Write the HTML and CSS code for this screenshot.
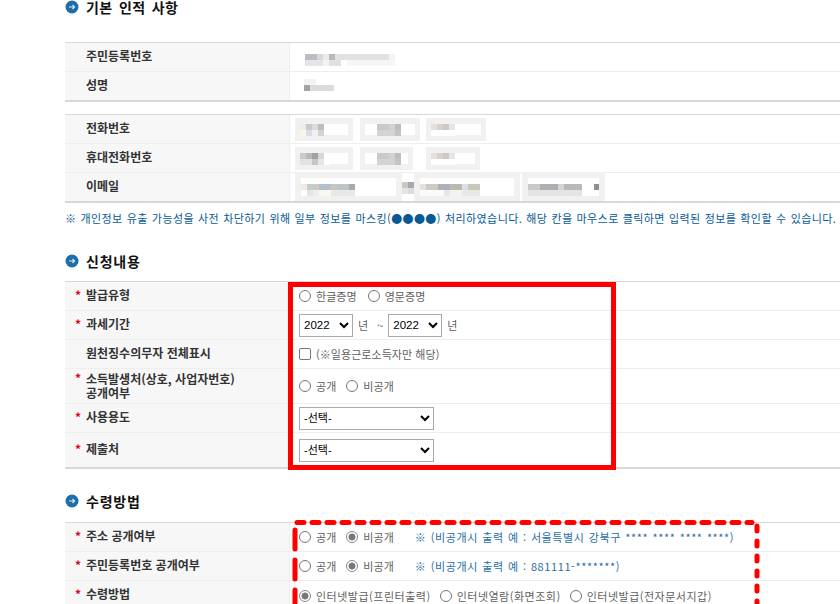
FILE: index.html
```html
<!DOCTYPE html>
<html lang="ko">
<head>
<meta charset="utf-8">
<title>신청</title>
<link rel="stylesheet" href="styles.css">
</head>
<body>
<main class="page">
  <h2 class="heading h-first"><svg class="bullet" viewBox="0 0 14 14"><circle cx="7" cy="7" r="6.5" fill="#1d6da6"/><path d="M4 7h5.5M7.5 5l2 2-2 2" fill="none" stroke="#dbe9f3" stroke-width="1.2"/></svg><span class="spaced">기본 인적 사항</span></h2>

  <section class="tbl">
    <div class="row"><div class="label">주민등록번호</div><div class="value"><span class="moz moz-id"></span></div></div>
    <div class="row"><div class="label">성명</div><div class="value"><span class="moz moz-name"></span></div></div>
  </section>

  <section class="tbl tbl-contact">
    <div class="row"><div class="label">전화번호</div><div class="value masks">
      <span class="box w58"><span class="moz m-a"></span></span><span class="box w60 ml7"><span class="moz m-b"></span></span><span class="box w60 ml6"><span class="moz m-c"></span></span>
    </div></div>
    <div class="row"><div class="label">휴대전화번호</div><div class="value masks">
      <span class="box w58"><span class="moz m-d"></span></span><span class="box w53 ml7"><span class="moz m-b"></span></span><span class="box w54 ml13"><span class="moz m-c"></span></span>
    </div></div>
    <div class="row"><div class="label">이메일</div><div class="value masks">
      <span class="box w107 tall"><span class="moz m-e"></span></span><span class="moz m-at"></span><span class="box w106 tall"><span class="moz m-f"></span></span><span class="box w83 tall ml2"><span class="moz m-g"></span></span>
    </div></div>
  </section>

  <p class="note">※ 개인정보 유출 가능성을 사전 차단하기 위해 일부 정보를 마스킹(●●●●) 처리하였습니다. 해당 칸을 마우스로 클릭하면 입력된 정보를 확인할 수 있습니다.</p>

  <h2 class="heading h-second"><svg class="bullet" viewBox="0 0 14 14"><circle cx="7" cy="7" r="6.5" fill="#1d6da6"/><path d="M4 7h5.5M7.5 5l2 2-2 2" fill="none" stroke="#dbe9f3" stroke-width="1.2"/></svg><span>신청내용</span></h2>

  <section class="tbl form">
    <div class="row"><div class="label req">발급유형</div><div class="value">
      <label class="opt"><input type="radio" name="a"><span>한글증명</span></label>
      <label class="opt opt-next"><input type="radio" name="a"><span>영문증명</span></label>
    </div></div>
    <div class="row"><div class="label req">과세기간</div><div class="value">
      <select class="sel-year"><option>2022</option></select><span class="unit">년</span><span class="tilde">~</span><select class="sel-year"><option>2022</option></select><span class="unit">년</span>
    </div></div>
    <div class="row"><div class="label plain">원천징수의무자 전체표시</div><div class="value">
      <label class="opt"><input type="checkbox"><span>(※일용근로소득자만 해당)</span></label>
    </div></div>
    <div class="row row-tall"><div class="label req two"><span>소득발생처(상호, 사업자번호)<br>공개여부</span></div><div class="value">
      <label class="opt"><input type="radio" name="b"><span>공개</span></label>
      <label class="opt opt-gap"><input type="radio" name="b"><span>비공개</span></label>
    </div></div>
    <div class="row"><div class="label req">사용용도</div><div class="value">
      <select class="sel-wide"><option>-선택-</option></select>
    </div></div>
    <div class="row row-tall"><div class="label req">제출처</div><div class="value">
      <select class="sel-wide"><option>-선택-</option></select>
    </div></div>
  </section>

  <h2 class="heading h-third"><svg class="bullet" viewBox="0 0 14 14"><circle cx="7" cy="7" r="6.5" fill="#1d6da6"/><path d="M4 7h5.5M7.5 5l2 2-2 2" fill="none" stroke="#dbe9f3" stroke-width="1.2"/></svg><span>수령방법</span></h2>

  <section class="tbl form">
    <div class="row"><div class="label req">주소 공개여부</div><div class="value">
      <label class="opt"><input type="radio" name="c"><span>공개</span></label>
      <label class="opt opt-gap"><input type="radio" name="c" checked><span>비공개</span></label>
      <span class="hint">※ (비공개시 출력 예 : 서울특별시 강북구 **** **** **** ****)</span>
    </div></div>
    <div class="row"><div class="label req">주민등록번호 공개여부</div><div class="value">
      <label class="opt"><input type="radio" name="d"><span>공개</span></label>
      <label class="opt opt-gap"><input type="radio" name="d" checked><span>비공개</span></label>
      <span class="hint">※ (비공개시 출력 예 : 881111-*******)</span>
    </div></div>
    <div class="row row-clip"><div class="label req">수령방법</div><div class="value">
      <label class="opt opt-wide"><input type="radio" name="e" checked><span>인터넷발급(프린터출력)</span></label>
      <label class="opt opt-wide opt-m1"><input type="radio" name="e"><span>인터넷열람(화면조회)</span></label>
      <label class="opt opt-wide opt-m2"><input type="radio" name="e"><span>인터넷발급(전자문서지갑)</span></label>
    </div></div>
  </section>
</main>

<div class="redbox"></div>
<svg class="dashes" viewBox="0 0 840 604" width="840" height="604">
  <path class="d-top" d="M297 522.5H752"/>
  <path class="d-left" d="M295 530V604"/>
  <path class="d-right" d="M757 526V604"/>
</svg>
</body>
</html>
```

FILE: styles.css
```css
html, body { margin: 0; padding: 0; height: 604px; overflow: hidden; background: #fff; }
body { position: relative; font-family: "Noto Sans CJK KR", "Liberation Sans", sans-serif; color: #5f5f5f; font-size: 11px; }
.page { padding-left: 65px; width: 775px; }

.heading { display: flex; align-items: center; margin: 0; height: 14px; font-size: 14px; line-height: 14px; font-weight: 700; color: #111; letter-spacing: .8px; }
.bullet { width: 14px; height: 14px; margin-right: 7px; flex: none; }
.spaced { letter-spacing: .4px; word-spacing: 2px; }
.h-first { margin-bottom: 28px; }
.h-second { margin-top: 29px; margin-bottom: 13px; }
.h-third { margin-top: 25px; margin-bottom: 14px; }

.tbl { border-top: 1px solid #d8d8d8; border-bottom: 2px solid #d8d8d8; }
.tbl-contact { margin-top: 12px; }
.row { display: grid; grid-template-columns: 225px 1fr; height: 28px; border-bottom: 1px solid #eee; }
.row:last-child { border-bottom: 0; }
.row-tall { height: 34px; }
.row-clip { height: 40px; }
.label { display: flex; align-items: center; padding: 0 0 3px 21px; background: #f7f7f7; border-right: 1px solid #eee; font-size: 12px; font-weight: 700; color: #333; line-height: 14px; box-sizing: border-box; }
.req { position: relative; }
.req::before { content: "*"; position: absolute; left: 10px; top: calc(50% - 8px); color: #d9001b; font-size: 12px; font-weight: 700; line-height: 14px; }
.two { padding-bottom: 0; }
.req.two::before { top: 2px; }
.row-clip .label, .row-clip .value { align-items: flex-start; padding-top: 7px; }
.row-clip .label { padding-top: 6px; }
.row-clip .req::before { top: 6px; }
.value { display: flex; align-items: center; padding-left: 9px; min-width: 0; white-space: nowrap; }

.opt { display: inline-flex; align-items: center; letter-spacing: .05px; }
.opt input { appearance: none; flex: none; width: 12px; height: 12px; margin: 0 5px 0 0; border: 1px solid #767676; border-radius: 50%; background: #fff; box-sizing: border-box; }
.opt input[type=radio]:checked { background: radial-gradient(circle, #777 0 3.2px, #fff 3.8px); border-color: #8a8a8a; }
.opt input[type=checkbox] { border-radius: 2px; }
.opt-next { margin-left: 11px; }
.opt-gap { margin-left: 10px; }
.opt-wide { letter-spacing: .5px; }
.opt-m1 { margin-left: 9px; }
.opt-m2 { margin-left: 9px; }
.hint { margin-left: 21px; color: #2a6ea6; letter-spacing: .6px; word-spacing: .6px; }

select { font-family: "Liberation Sans", "Noto Sans CJK KR", sans-serif; color: #000; background: #fff; border: 1px solid #a9a9a9; height: 23px; padding: 0; box-sizing: border-box; }
.sel-year { width: 54px; font-size: 11.5px; }
.sel-wide { width: 135px; font-size: 11px; }
.unit { margin-left: 5px; }
.tilde { margin: 0 5px 0 9px; }

.note { margin: 8px 0 0; font-size: 11px; line-height: 14px; color: #075a96; white-space: nowrap; letter-spacing: .41px; word-spacing: .6px; }

.masks { padding-left: 5px; }
.box { display: inline-flex; align-items: flex-end; box-sizing: border-box; height: 23px; padding: 0; background: #fff; border: 5px solid #f1f1f1; border-width: 6px 5px; }
.tall { height: 29px; margin-top: -1px; border-width: 6px 6px 5px; }
.w58 { width: 58px; }
.w60 { width: 60px; }
.w53 { width: 53px; }
.w54 { width: 54px; }
.w107 { width: 107px; }
.w106 { width: 106px; }
.w83 { width: 83px; }
.ml2 { margin-left: 2px; }
.ml6 { margin-left: 6px; }
.ml7 { margin-left: 7px; }
.ml13 { margin-left: 13px; }

.moz { display: block; height: 12px; background-repeat: no-repeat; background-position: left top, left bottom; background-size: 100% 6px; }
.moz-id { width: 96px; margin-top: 6px; background-image:
  linear-gradient(90deg, #fff 0 6px, #bdbdbd 6px 18px, #d8d8d8 18px 24px, #ececec 24px 30px, #b9b9b9 30px 36px, #e2e2e2 36px 90px, #eef4f8 90px),
  linear-gradient(90deg, #fff 0 6px, #e2e6ea 6px 24px, #f3f3f3 24px 30px, #e0e0e0 30px 42px, #fff 42px 48px, #f6f6f6 48px 96px); }
.moz-name { width: 36px; margin: -3px 0 0 5px; background-image:
  linear-gradient(90deg, #f3f3f3 0 12px, #fff 12px),
  linear-gradient(90deg, #a3a3a3 0 6px, #dcdcdc 6px 30px, #fff 30px); }
.m-a { width: 24px; align-self: flex-start; background-image:
  linear-gradient(90deg, #f6e9df 0 6px, #c3ccd6 6px 12px, #dcdcdc 12px 18px, #bdbdbd 18px 24px),
  linear-gradient(90deg, #fbf4ed 0 6px, #d8dee4 6px 12px, #eef0f2 12px 18px, #d4d4d4 18px 24px); }
.m-b { width: 24px; margin-left: 12px; align-self: flex-start; background-image:
  linear-gradient(90deg, #c9c9c9 0 12px, #cfd3d6 12px 18px, #bdbdbd 18px 24px),
  linear-gradient(90deg, #d2d5d8 0 18px, #c4c4c4 18px 24px); }
.m-c { width: 24px; align-self: flex-start; background-image:
  linear-gradient(90deg, #e6dfdc 0 6px, #d8d2cf 6px 12px, #cdc8c2 12px 18px, #dfe6ee 18px 24px),
  linear-gradient(90deg, #fff 0 24px); }
.m-d { width: 30px; align-self: flex-start; background-image:
  linear-gradient(90deg, #cfcac6 0 6px, #b8b8b8 6px 12px, #a2a2a2 12px 18px, #d0d8dc 18px 24px, #fff 24px),
  linear-gradient(90deg, #e6e0dc 0 6px, #dfe4e6 6px 12px, #c8c8c0 12px 18px, #e4e8ea 18px 24px, #fff 24px); }
.m-e { width: 54px; height: 12px; background-image:
  linear-gradient(90deg, #f6e9df 0 6px, #c3ccd2 6px 12px, #cfc8bd 12px 18px, #b3c0cc 18px 30px, #c9c6bc 30px 36px, #bcc4c8 36px 48px, #aaaaaa 48px 54px),
  linear-gradient(90deg, #fff 0 6px, #e6e4df 6px 12px, #ecedee 12px 18px, #faf6f0 18px 30px, #e8e8e8 30px 54px); }
.m-at { width: 12px; height: 12px; margin: 2px 0 0 0; flex: none; background-image:
  linear-gradient(90deg, #c9c9c2 0 6px, #a8a8a8 6px 12px),
  linear-gradient(90deg, #e4e4e0 0 6px, #dcdce0 6px 12px); }
.m-f { width: 60px; height: 12px; background-image:
  linear-gradient(90deg, #e4e0dc 0 6px, #cfc8c4 6px 18px, #aeb2b6 18px 30px, #b9b9b0 30px 42px, #d9dfea 42px 48px, #cbc8b8 48px 60px),
  linear-gradient(90deg, #fbfbfb 0 24px, #e6e6ea 24px 30px, #f4f2f0 30px 42px, #e8e8e8 42px 60px); }
.m-g { width: 78px; height: 12px; background-image:
  linear-gradient(90deg, #c9c9c9 0 12px, #aeaeb2 12px 30px, #d4d4d8 30px 36px, #b8b8b8 36px 54px, #fff 54px 66px, #8f8f8f 66px 72px, #d4d4d4 72px),
  linear-gradient(90deg, #e4e4e4 0 36px, #e8e4e0 36px 42px, #e4e4e8 42px 54px, #fff 54px); }

.redbox { position: absolute; left: 288px; top: 282px; width: 328px; height: 188px; border: 5px solid #f00; box-sizing: border-box; }
.dashes { position: absolute; left: 0; top: 0; pointer-events: none; }
.dashes path { fill: none; stroke: #f00; stroke-width: 5; stroke-linecap: round; }
.d-top { stroke-dasharray: 7 8; }
.d-left { stroke-dasharray: 19 11; }
.d-right { stroke-dasharray: 5 10; }
```
